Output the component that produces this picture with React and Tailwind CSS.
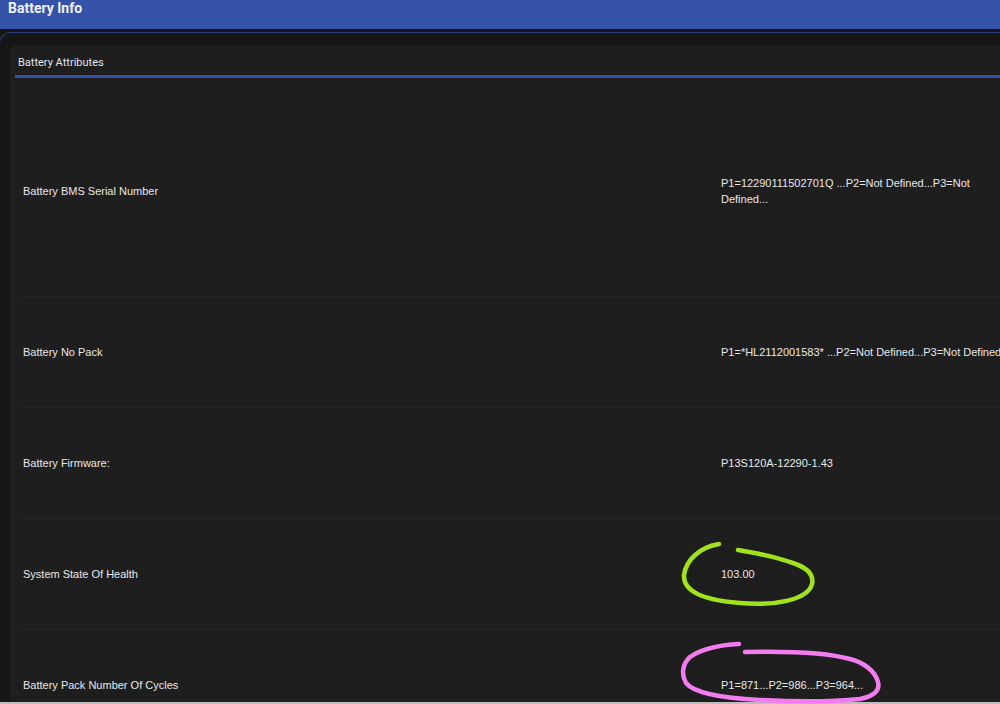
import React from "react";

const rows = [
  {
    label: "Battery BMS Serial Number",
    value: "P1=12290111502701Q ...P2=Not Defined...P3=Not Defined...",
    h: "h-[210px]",
  },
  {
    label: "Battery No Pack",
    value: "P1=*HL2112001583* ...P2=Not Defined...P3=Not Defined",
    h: "h-[111px]",
  },
  { label: "Battery Firmware:", value: "P13S120A-12290-1.43", h: "h-[111px]" },
  { label: "System State Of Health", value: "103.00", h: "h-[111px]" },
  {
    label: "Battery Pack Number Of Cycles",
    value: "P1=871...P2=986...P3=964...",
    h: "h-[111px]",
  },
];

const Annotations = () => (
  <svg
    className="absolute inset-0 pointer-events-none"
    width="1000"
    height="704"
    viewBox="0 0 1000 704"
    fill="none"
  >
    {/* green scribble round the health value */}
    <path
      d="M719,544 C700,547 686,560 684,575 C683,590 700,600 740,603 C775,606 808,600 812,584 C815,571 800,565 790,562 C770,555 755,553 738,550"
      stroke="#9fe21d"
      strokeWidth="4.5"
      strokeLinecap="round"
    />
    {/* pink scribble round the cycles value */}
    <path
      d="M739,644 C718,645 700,650 690,657 C681,665 682,676 686,683 C694,693 720,698 760,700 C800,702 840,701 860,699 C875,696 880,690 878,682 C875,670 862,662 850,659 C825,652 790,651 745,652"
      stroke="#f27cf0"
      strokeWidth="4.5"
      strokeLinecap="round"
    />
  </svg>
);

export default function App() {
  return (
    <div
      className="relative w-[1000px] h-[704px] overflow-hidden flex flex-col bg-[#161616] text-[#e8e8e8]"
      style={{ fontFamily: "'Liberation Sans', Arial, sans-serif" }}
    >
      <div className="h-[702px] overflow-hidden flex flex-col">
        {/* Top bar */}
        <div className="h-[29px] shrink-0 bg-[#3453a8] px-2">
          <h1 className="text-[14px] leading-[16px] font-bold text-[#eef1fa] font-['Roboto',sans-serif]">
            Battery Info
          </h1>
        </div>

        {/* Page body */}
        <div className="mt-[3px] -ml-[1px] flex-1 border-t border-l border-[#2b4080] rounded-tl-[12px] pt-[12px] pl-[10px]">
          <div className="w-[1300px] bg-[#1e1e1e] rounded-tl-[6px] pl-[5px] pt-[11px]">
            <div className="pl-[3px] pb-[5px] text-[11px] leading-[14px] text-[#e4e4e4] font-['Roboto',sans-serif]">
              Battery Attributes
            </div>
            <div className="h-[3px] bg-[#3453a8]" />

            <div className="pt-[8px] pl-[5px]">
              {rows.map((r, i) => (
                <div
                  key={r.label}
                  className={`${r.h} flex items-center text-[11px] leading-4 ${
                    i > 0 ? "border-t border-[#252525]" : ""
                  }`}
                >
                  <div className="w-[701px] shrink-0 pl-[3px]">{r.label}</div>
                  <div className="w-[284px] shrink-0">{r.value}</div>
                </div>
              ))}
            </div>
          </div>
        </div>
      </div>
      <div className="h-[2px] bg-[#bdbdbd]" />

      <Annotations />
    </div>
  );
}
